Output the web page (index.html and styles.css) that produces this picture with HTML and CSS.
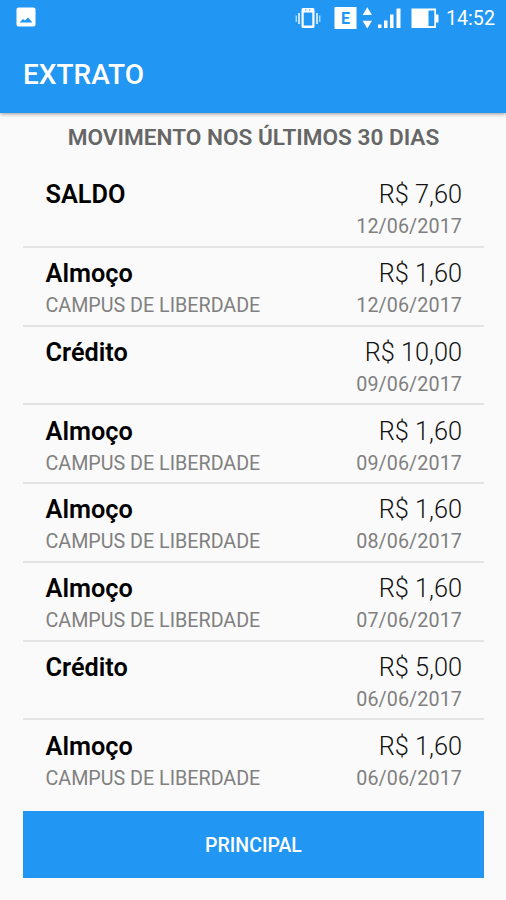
FILE: index.html
```html
<!DOCTYPE html>
<html lang="pt-BR">
<head>
  <meta charset="UTF-8" />
  <meta name="viewport" content="width=device-width, initial-scale=1.0"/>
  <title>Extrato</title>
  <link rel="stylesheet" href="styles.css">
</head>
<body>
  <header class="app-header">
    <div class="status-bar">
      <svg class="icon-image" width="20" height="20" viewBox="0 0 20 20">
        <rect x="0.5" y="0.5" width="19" height="19" rx="2" fill="#fff"/>
        <path d="M3.500 15.500 L7 12 L9 13.500 L12 10.500 L16.500 15.500 Z" fill="#2196f3"/>
      </svg>
      <div class="status-right">
        <svg class="icons" width="146" height="24" viewBox="0 0 146 24" fill="#fff">
          <!-- vibrate -->
          <path d="M7.5 3.5 Q7.5 2 9 2 H19 Q20.500 2 20.500 3.500 V20.500 Q20.500 22 19 22 H9 Q7.500 22 7.500 20.500 Z M9.700 6.500 V19.500 H18.300 V6.500 Z" fill-rule="evenodd"/>
          <path d="M11 4 H12.500 M15 4 H16.500" stroke="#2196f3" stroke-width="1"/>
          <path d="M5 7 V18 M23 7 V18" stroke="#fff" stroke-width="1.800" opacity="0.8"/>
          <path d="M2.300 9.500 V16 M25.700 9.500 V16" stroke="#fff" stroke-width="1.500" opacity="0.6"/>
          <!-- network type -->
          <rect x="40.500" y="1" width="22" height="22"/>
          <text x="51.500" y="17.500" class="net-type">E</text>
          <!-- data arrows -->
          <path d="M73.300 1.200 L78 9 H68.600 Z"/>
          <path d="M73.300 22.500 L78 14.800 H68.600 Z"/>
          <!-- signal -->
          <rect x="84" y="18.500" width="3.500" height="3.500"/>
          <rect x="90" y="14.500" width="3.500" height="7.500"/>
          <rect x="96" y="8.500" width="3.500" height="13.500"/>
          <rect x="102.500" y="2.500" width="4" height="19.500"/>
          <!-- battery -->
          <path d="M117.500 2.500 H142 V8.500 H144.500 V16.500 H142 V22 H117.500 Z M134.500 4.500 V20 H140.300 V4.500 Z" fill-rule="evenodd"/>
        </svg>
        <span class="clock">14:52</span>
      </div>
    </div>
    <h1>EXTRATO</h1>
  </header>

  <main>
    <h2>MOVIMENTO NOS ÚLTIMOS 30 DIAS</h2>

    <ul class="movimentos">
      <li>
        <div class="linha"><strong>SALDO</strong><span>R$ 7,60</span></div>
        <div class="linha detalhe"><span class="local"></span><span class="data">12/06/2017</span></div>
      </li>
      <li>
        <div class="linha"><strong>Almoço</strong><span>R$ 1,60</span></div>
        <div class="linha detalhe"><span class="local">CAMPUS DE LIBERDADE</span><span class="data">12/06/2017</span></div>
      </li>
      <li>
        <div class="linha"><strong>Crédito</strong><span>R$ 10,00</span></div>
        <div class="linha detalhe"><span class="local"></span><span class="data">09/06/2017</span></div>
      </li>
      <li>
        <div class="linha"><strong>Almoço</strong><span>R$ 1,60</span></div>
        <div class="linha detalhe"><span class="local">CAMPUS DE LIBERDADE</span><span class="data">09/06/2017</span></div>
      </li>
      <li>
        <div class="linha"><strong>Almoço</strong><span>R$ 1,60</span></div>
        <div class="linha detalhe"><span class="local">CAMPUS DE LIBERDADE</span><span class="data">08/06/2017</span></div>
      </li>
      <li>
        <div class="linha"><strong>Almoço</strong><span>R$ 1,60</span></div>
        <div class="linha detalhe"><span class="local">CAMPUS DE LIBERDADE</span><span class="data">07/06/2017</span></div>
      </li>
      <li>
        <div class="linha"><strong>Crédito</strong><span>R$ 5,00</span></div>
        <div class="linha detalhe"><span class="local"></span><span class="data">06/06/2017</span></div>
      </li>
      <li>
        <div class="linha"><strong>Almoço</strong><span>R$ 1,60</span></div>
        <div class="linha detalhe"><span class="local">CAMPUS DE LIBERDADE</span><span class="data">06/06/2017</span></div>
      </li>
    </ul>

    <button type="button" class="btn-principal">PRINCIPAL</button>
  </main>
</body>
</html>
```
FILE: styles.css
```css
* {
  box-sizing: border-box;
}

body {
  margin: 0;
  height: 900px;
  overflow: hidden;
  background-color: #fafafa;
  color: #111;
  font-family: Roboto, "Liberation Sans", sans-serif;
}

.app-header {
  height: 113px;
  background-color: #2196f3;
  color: white;
  box-shadow: 0 1px 4px rgba(0, 0, 0, 0.4);
}

.status-bar {
  height: 35px;
  padding: 0 11px 0 16px;
  display: flex;
  justify-content: space-between;
  align-items: center;
}

.icon-image {
  margin-bottom: 1px;
}

.status-right {
  display: flex;
  align-items: center;
}

.icons {
  margin-right: 6px;
}

.net-type {
  fill: #2196f3;
  font-size: 16px;
  font-weight: bold;
  text-anchor: middle;
}

.clock {
  padding-top: 1px;
  font-size: 19.7px;
  font-weight: 400;
  line-height: 35px;
}

.app-header h1 {
  margin: 0;
  padding-left: 23px;
  font-size: 28px;
  font-weight: 500;
  line-height: 80px;
}

main {
  padding: 0 22px 0 23px;
}

main h2 {
  margin: 0;
  height: 56px;
  font-size: 22.6px;
  font-weight: 600;
  line-height: 49px;
  text-align: center;
  color: #666;
}

.movimentos {
  list-style: none;
  margin: 0;
  padding: 0;
}

.movimentos li {
  height: 78.75px;
  padding: 9.3px 22px 0 22.5px;
}

.movimentos li + li {
  box-shadow: 0 -2px 0 #e4e4e4;
}

.linha {
  display: flex;
  justify-content: space-between;
  height: 33px;
  font-size: 25.3px;
  font-weight: 300;
  line-height: 34px;
}

.linha strong {
  font-weight: 600;
  color: #000;
}

.detalhe {
  height: 30px;
  font-size: 19.7px;
  font-weight: 400;
  line-height: 31.5px;
  color: #808080;
}

.data {
  letter-spacing: 0.1px;
}

.btn-principal {
  display: block;
  width: 100%;
  height: 67px;
  margin-top: 11.5px;
  padding: 3px 0 0;
  border: none;
  background-color: #2196f3;
  color: white;
  font-family: inherit;
  font-size: 19.5px;
  font-weight: 500;
}
```
